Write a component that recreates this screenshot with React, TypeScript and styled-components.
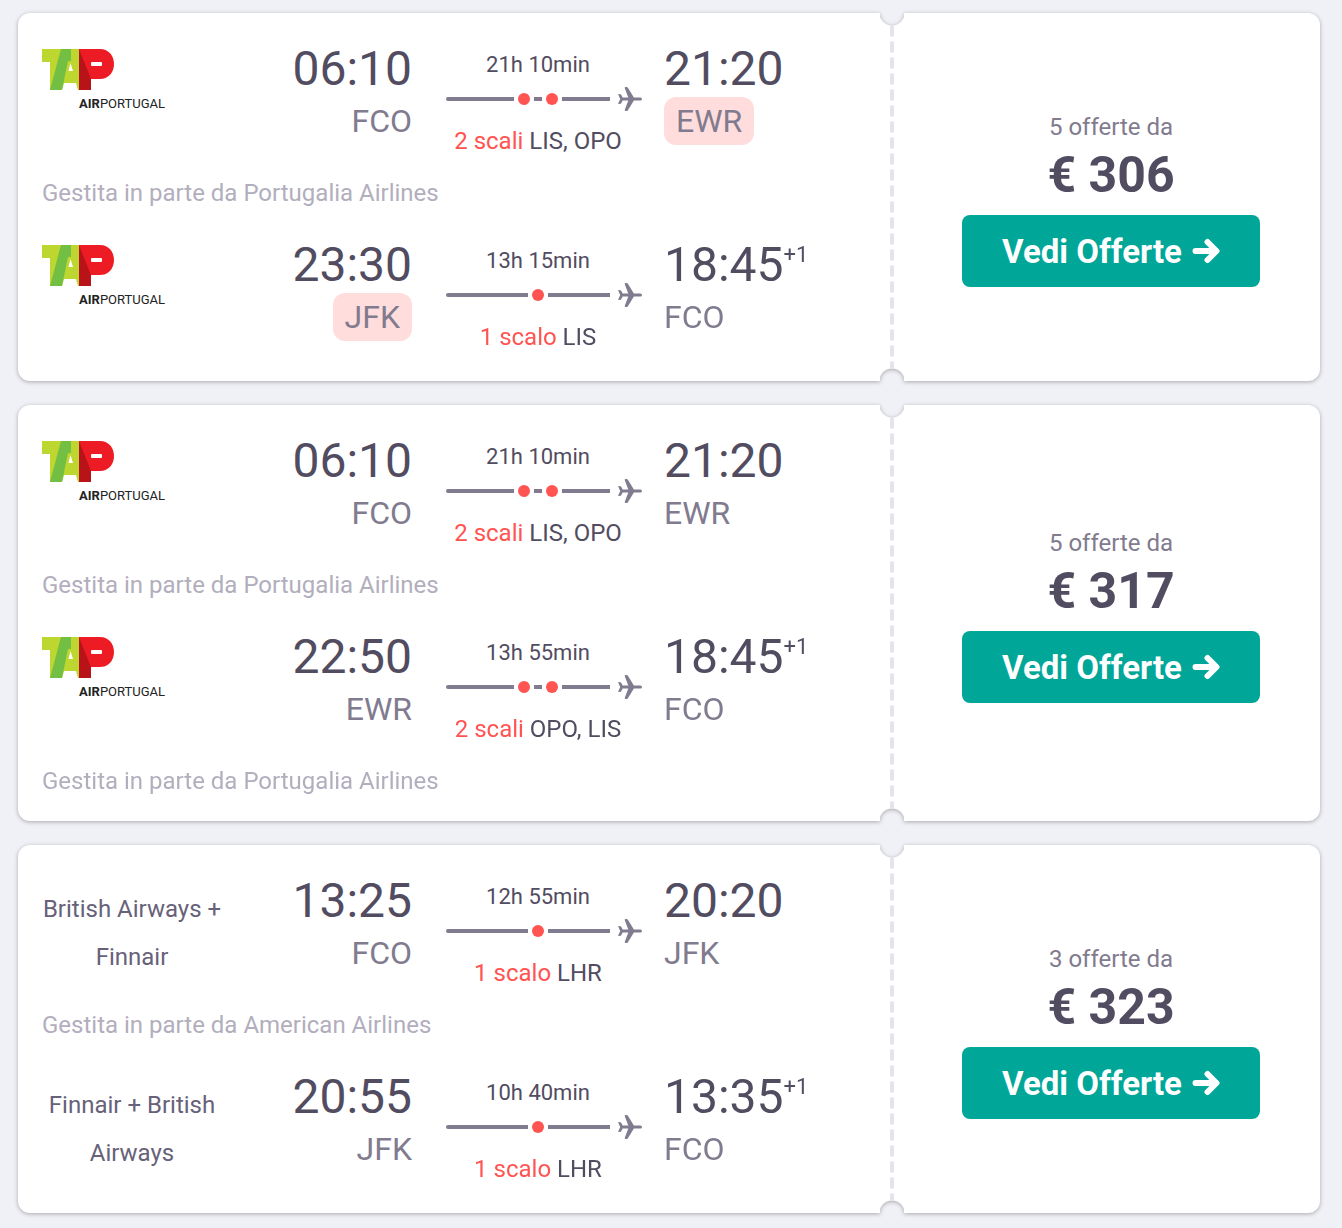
import React from "react";
import styled, { createGlobalStyle } from "styled-components";

const ink = "#524c61";
const muted = "#817b8f";
const faint = "#b2aebd";
const alert = "#ff5452";
const page = "#f0f1f7";

const GlobalStyle = createGlobalStyle`
  *, *::before, *::after { box-sizing: border-box; }
  body {
    margin: 0;
    background: ${page};
    color: ${ink};
    font-family: Roboto, "Liberation Sans", sans-serif;
    font-size: 24px;
    line-height: 24px;
  }
`;

const Results = styled.main`
  display: flex;
  flex-direction: column;
  gap: 24px;
  padding: 13px 22px 15px 18px;
`;

const Ticket = styled.article`
  display: grid;
  grid-template-columns: minmax(0, 1fr) 24px 416px;
  filter: drop-shadow(0 1px 2px rgba(37, 32, 31, 0.35));
`;

const Itinerary = styled.div`
  padding: 8px 12px 16px 24px;
  background: #fff;
  border-radius: 12px 0 0 12px;
`;

const Perforation = styled.div`
  display: flex;
  justify-content: center;
  padding: 12px 0;
  background:
    radial-gradient(circle at 50% 0, transparent 12px, #fff 13px) top / 100% 50% no-repeat,
    radial-gradient(circle at 50% 100%, transparent 12px, #fff 13px) bottom / 100% 50% no-repeat;
`;

const Dashes = styled.svg`
  width: 4px;
  height: 100%;
`;

const Offer = styled.div`
  display: flex;
  flex-direction: column;
  justify-content: center;
  padding: 24px 60px 24px 58px;
  background: #fff;
  border-radius: 0 12px 12px 0;
  text-align: center;
`;

const OfferCount = styled.span`
  color: ${muted};
  line-height: 40px;
`;

const Price = styled.strong`
  font-size: 50px;
  line-height: 56px;
  font-weight: 700;
`;

const OfferButton = styled.button`
  display: flex;
  align-items: center;
  justify-content: center;
  gap: 10px;
  height: 72px;
  margin-top: 12px;
  padding: 0;
  border: 0;
  border-radius: 8px;
  background: #00a698;
  color: #fff;
  font-family: inherit;
  font-size: 33px;
  font-weight: 700;
  cursor: pointer;
`;

const LegRow = styled.div`
  display: grid;
  grid-template-columns: 180fr 190fr 252fr 204fr;
  padding: 24px 0 16px;
`;

const Logo = styled.svg`
  display: block;
  margin-top: 4px;
  width: 120px;
  height: 60px;
  overflow: visible;
`;

const CarrierNames = styled.div`
  padding-top: 8px;
  line-height: 48px;
  text-align: center;
  color: #68617a;
`;

const Endpoint = styled.div<{ $end?: boolean }>`
  display: flex;
  flex-direction: column;
  gap: 4px;
  align-items: ${(p) => (p.$end ? "flex-end" : "flex-start")};
`;

const Time = styled.div`
  display: flex;
  font-size: 48px;
  line-height: 48px;
`;

const DayShift = styled.sup`
  font-size: 22px;
  line-height: 28px;
`;

const Airport = styled.div<{ $changed?: boolean }>`
  padding: ${(p) => (p.$changed ? "0 12px" : "0")};
  border-radius: 12px;
  background: ${(p) => (p.$changed ? "#ffdddc" : "transparent")};
  color: ${muted};
  font-size: 32px;
  line-height: 48px;
`;

const Route = styled.div`
  margin: 0 22px 0 34px;
  padding-top: 8px;
`;

const Caption = styled.div`
  padding-right: 12px;
  text-align: center;
  white-space: nowrap;
`;

const Duration = styled(Caption)`
  font-size: 22px;
`;

const StopCount = styled.span`
  color: ${alert};
`;

const Rail = styled.div`
  display: flex;
  align-items: center;
  gap: 8px;
  height: 24px;
  margin: 10px 0 18px;
`;

const Line = styled.div`
  flex: 1;
  display: flex;
  align-items: center;
  justify-content: center;
  gap: 8px;
  height: 4px;
  padding-left: 20px;
  border-radius: 2px 0 0 2px;
  background: ${muted};
`;

const Stop = styled.span`
  display: flex;
  justify-content: center;
  width: 20px;
  height: 12px;
  background: #fff;

  &::before {
    content: "";
    width: 12px;
    height: 12px;
    border-radius: 50%;
    background: ${alert};
  }
`;

const OperatedBy = styled.div`
  color: ${faint};
  line-height: 48px;
`;

const TapLogo = () => (
  <Logo viewBox="0 0 120 60" role="img" aria-label="TAP Air Portugal">
    <path d="M0 0H37V41H36L34 34H22L20 41H8V13H0Z" fill="#bed630" />
    <path d="M19 0H29V12H26L20 41H8Z" fill="#72bf44" />
    <path d="M28.500 14L31 22H26.500Z" fill="#fff" />
    <path d="M37 0H58C67 0 72 7 72 15C72 23 67 30 58 30H49V41H37Z" fill="#ed1c24" />
    <path d="M37 0L49 30V41H37Z" fill="#b9131a" />
    <rect x="49" y="13" width="11" height="4" rx="1" fill="#fff" />
    <text x="37" y="59" fontFamily="Roboto, sans-serif" fontSize="13" fill="#222">
      <tspan fontWeight="700">AIR</tspan>PORTUGAL
    </text>
  </Logo>
);

const Plane = () => (
  <svg width="24" height="24" viewBox="0 0 12 12" fill={muted} aria-hidden="true">
    <path d="M3.922 12h.499a.52.52 0 0 0 .444-.247L7.949 6.8l3.233-.019A.8.8 0 0 0 12 6a.8.8 0 0 0-.818-.781L7.949 5.2 4.866.246A.525.525 0 0 0 4.421 0h-.499a.523.523 0 0 0-.489.71L5.149 5.2H2.296l-.664-1.33a.523.523 0 0 0-.436-.288L0 3.509 1.097 6 0 8.491l1.196-.073a.523.523 0 0 0 .436-.288l.664-1.33h2.853l-1.716 4.49a.523.523 0 0 0 .489.71" />
  </svg>
);

const Arrow = () => (
  <svg width="28" height="26" viewBox="0 0 28 26" fill="none" stroke="#fff" strokeWidth="6" strokeLinecap="round" strokeLinejoin="round" aria-hidden="true">
    <path d="M3.500 13H24M15.500 4L24.500 13L15.500 22" />
  </svg>
);

type Leg = {
  carrier?: string;
  from: string;
  depart: string;
  fromChanged?: boolean;
  to: string;
  arrive: string;
  toChanged?: boolean;
  nextDay?: boolean;
  duration: string;
  stops: string[];
  operator?: string;
};

type Fare = { offers: number; price: number; legs: Leg[] };

const fares: Fare[] = [
  {
    offers: 5,
    price: 306,
    legs: [
      { from: "FCO", depart: "06:10", to: "EWR", arrive: "21:20", toChanged: true, duration: "21h 10min", stops: ["LIS", "OPO"], operator: "Portugalia Airlines" },
      { from: "JFK", depart: "23:30", fromChanged: true, to: "FCO", arrive: "18:45", nextDay: true, duration: "13h 15min", stops: ["LIS"] },
    ],
  },
  {
    offers: 5,
    price: 317,
    legs: [
      { from: "FCO", depart: "06:10", to: "EWR", arrive: "21:20", duration: "21h 10min", stops: ["LIS", "OPO"], operator: "Portugalia Airlines" },
      { from: "EWR", depart: "22:50", to: "FCO", arrive: "18:45", nextDay: true, duration: "13h 55min", stops: ["OPO", "LIS"], operator: "Portugalia Airlines" },
    ],
  },
  {
    offers: 3,
    price: 323,
    legs: [
      { carrier: "British Airways + Finnair", from: "FCO", depart: "13:25", to: "JFK", arrive: "20:20", duration: "12h 55min", stops: ["LHR"], operator: "American Airlines" },
      { carrier: "Finnair + British Airways", from: "JFK", depart: "20:55", to: "FCO", arrive: "13:35", nextDay: true, duration: "10h 40min", stops: ["LHR"] },
    ],
  },
];

const LegView = ({ leg }: { leg: Leg }) => (
  <section>
    <LegRow>
      {leg.carrier ? <CarrierNames>{leg.carrier}</CarrierNames> : <TapLogo />}
      <Endpoint $end>
        <Time>{leg.depart}</Time>
        <Airport $changed={leg.fromChanged}>{leg.from}</Airport>
      </Endpoint>
      <Route>
        <Duration>{leg.duration}</Duration>
        <Rail>
          <Line>
            {leg.stops.map((s) => (
              <Stop key={s} />
            ))}
          </Line>
          <Plane />
        </Rail>
        <Caption>
          <StopCount>{leg.stops.length === 1 ? "1 scalo" : `${leg.stops.length} scali`}</StopCount>{" "}
          {leg.stops.join(", ")}
        </Caption>
      </Route>
      <Endpoint>
        <Time>
          {leg.arrive}
          {leg.nextDay && <DayShift>+1</DayShift>}
        </Time>
        <Airport $changed={leg.toChanged}>{leg.to}</Airport>
      </Endpoint>
    </LegRow>
    {leg.operator && <OperatedBy>Gestita in parte da {leg.operator}</OperatedBy>}
  </section>
);

export default function App() {
  return (
    <>
      <GlobalStyle />
      <Results>
        {fares.map((fare) => (
          <Ticket key={fare.price}>
            <Itinerary>
              {fare.legs.map((leg) => (
                <LegView key={leg.depart} leg={leg} />
              ))}
            </Itinerary>
            <Perforation>
              <Dashes aria-hidden="true">
                <line x1="2" y1="2" x2="2" y2="100%" stroke="#e6e4eb" strokeWidth="4" strokeLinecap="round" strokeDasharray="8 8" />
              </Dashes>
            </Perforation>
            <Offer>
              <OfferCount>{fare.offers} offerte da</OfferCount>
              <Price>€ {fare.price}</Price>
              <OfferButton type="button">
                Vedi Offerte
                <Arrow />
              </OfferButton>
            </Offer>
          </Ticket>
        ))}
      </Results>
    </>
  );
}
